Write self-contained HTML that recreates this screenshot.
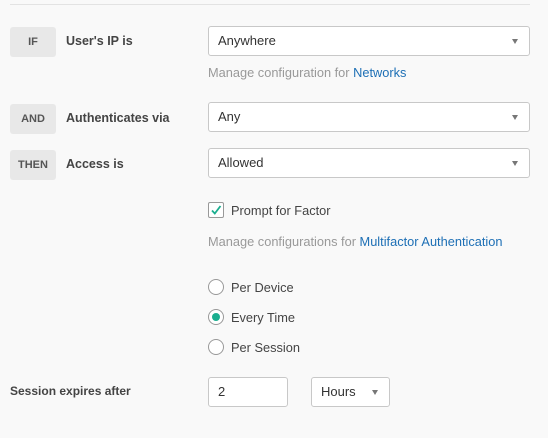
<!DOCTYPE html>
<html><head><style>
*{margin:0;padding:0;box-sizing:border-box}
body{width:548px;height:438px;background:#f9f9f9;font-family:"Liberation Sans",sans-serif;color:#333;position:relative;overflow:hidden}
.a{position:absolute}
.hr{left:10px;top:4px;width:520px;height:1px;background:#e3e3e3}
.badge{left:10px;width:46px;height:30px;background:#e8e8e8;border-radius:3px;font-size:11px;font-weight:bold;color:#555;text-align:center;line-height:30px}
.lbl{left:66px;font-size:12.5px;font-weight:bold;color:#444}
.sel{left:208px;width:322px;height:30px;background:#fff;border:1px solid #c8c8c8;border-radius:3px;font-size:13px;line-height:28px;padding-left:9px;color:#333}
.sel:after{content:"";position:absolute;right:11px;top:12px;border-left:3.5px solid transparent;border-right:3.5px solid transparent;border-top:5px solid #777}
.note{left:208px;font-size:12.8px;color:#999}
.note span{color:#1d6fb5}
.radio{left:208px;width:16px;height:16px;border:1px solid #999;border-radius:50%;background:#fff}
.rt{left:231px;font-size:12.8px;color:#444}
</style></head><body>
<div class="a hr"></div>
<div class="a badge" style="top:27px">IF</div>
<div class="a lbl" style="top:34px">User's IP is</div>
<div class="a sel" style="top:26px">Anywhere</div>
<div class="a note" style="top:65px">Manage configuration for <span>Networks</span></div>
<div class="a badge" style="top:104px">AND</div>
<div class="a lbl" style="top:111px">Authenticates via</div>
<div class="a sel" style="top:102px">Any</div>
<div class="a badge" style="top:150px">THEN</div>
<div class="a lbl" style="top:157px">Access is</div>
<div class="a sel" style="top:148px">Allowed</div>
<div class="a" style="left:208px;top:202px;width:16px;height:16px;border:1px solid #999;border-radius:2px;background:#fff">
<svg width="14" height="14" viewBox="0 0 14 14" style="position:absolute;left:0;top:0"><path d="M3 7.5L5.8 10.5L11.5 3" fill="none" stroke="#1aae8f" stroke-width="1.8"/></svg></div>
<div class="a rt" style="top:203px">Prompt for Factor</div>
<div class="a note" style="top:234px">Manage configurations for <span>Multifactor Authentication</span></div>
<div class="a radio" style="top:279px"></div>
<div class="a rt" style="top:280px">Per Device</div>
<div class="a radio" style="top:309px"><div class="a" style="left:3px;top:3px;width:8px;height:8px;border-radius:50%;background:#1aae8f"></div></div>
<div class="a rt" style="top:310px">Every Time</div>
<div class="a radio" style="top:339px"></div>
<div class="a rt" style="top:340px">Per Session</div>
<div class="a lbl" style="left:10px;top:384px;font-size:12px">Session expires after</div>
<div class="a" style="left:208px;top:377px;width:80px;height:30px;background:#fff;border:1px solid #c8c8c8;border-radius:3px;font-size:13px;line-height:28px;padding-left:9px">2</div>
<div class="a sel" style="left:311px;top:377px;width:79px">Hours</div>
</body></html>
